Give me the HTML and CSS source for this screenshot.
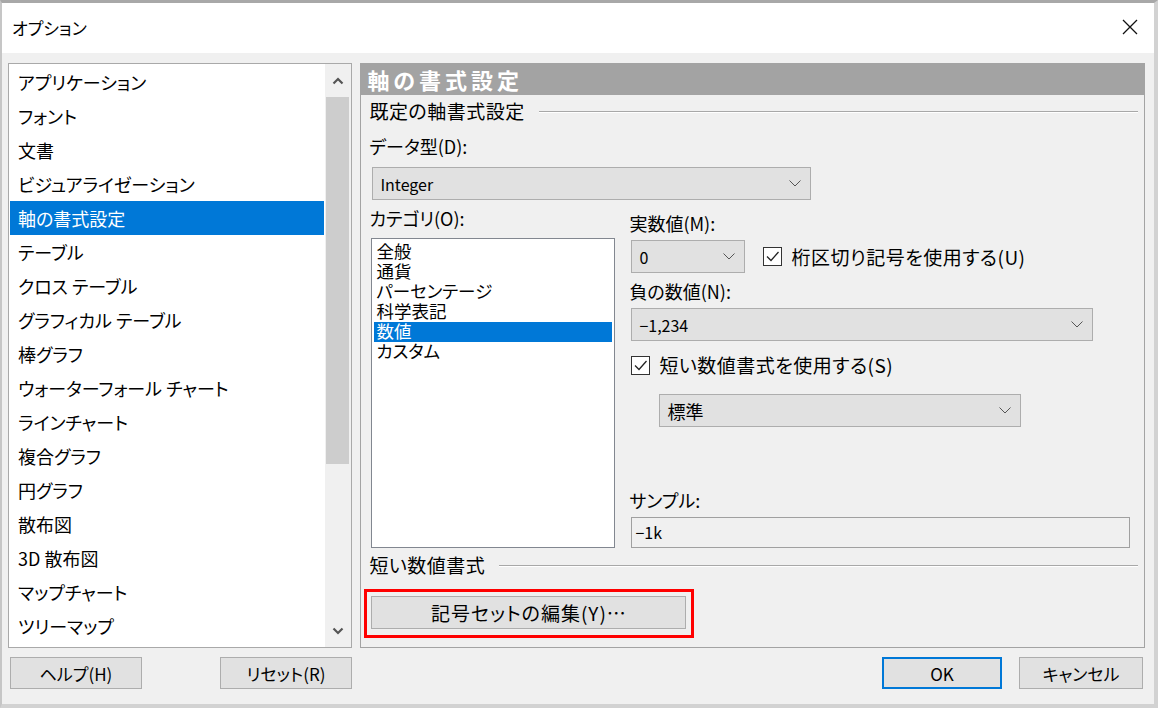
FILE: index.html
```html
<!DOCTYPE html>
<html lang="ja">
<head>
    <meta charset="UTF-8">
    <title>オプション</title>
    <link rel="stylesheet" href="styles.css">
</head>
<body>
<div class="window">
    <div class="titlebar">
        <span class="title">オプション</span>
        <svg class="close" width="16" height="16" viewBox="0 0 16 16"><path d="M1 1 L15 15 M15 1 L1 15" stroke="#111" stroke-width="1.3" fill="none"/></svg>
    </div>

    <div class="dialog-body">
        <div class="main">
            <!-- 左側のメニュー -->
            <div class="nav">
                <ul class="nav-list">
                    <li>アプリケーション</li>
                    <li>フォント</li>
                    <li>文書</li>
                    <li>ビジュアライゼーション</li>
                    <li class="selected">軸の書式設定</li>
                    <li>テーブル</li>
                    <li>クロス テーブル</li>
                    <li>グラフィカル テーブル</li>
                    <li>棒グラフ</li>
                    <li>ウォーターフォール チャート</li>
                    <li>ラインチャート</li>
                    <li>複合グラフ</li>
                    <li>円グラフ</li>
                    <li>散布図</li>
                    <li>3D 散布図</li>
                    <li>マップチャート</li>
                    <li>ツリーマップ</li>
                </ul>
                <div class="scrollbar">
                    <div class="sb-btn"><svg width="12" height="8" viewBox="0 0 12 8"><path d="M1.5 6.5 L6 2 L10.5 6.5" stroke="#555" stroke-width="2.2" fill="none"/></svg></div>
                    <div class="sb-track"><div class="sb-thumb"></div></div>
                    <div class="sb-btn"><svg width="12" height="8" viewBox="0 0 12 8"><path d="M1.5 1.5 L6 6 L10.5 1.5" stroke="#555" stroke-width="2.2" fill="none"/></svg></div>
                </div>
            </div>

            <!-- 右側の設定パネル -->
            <div class="panel">
                <div class="panel-head">軸の書式設定</div>
                <div class="panel-body">
                    <div class="group-title">既定の軸書式設定</div>
                    <div class="label label-type">データ型(D):</div>
                    <div class="combo combo-type">
                        <span>Integer</span>
                        <svg width="12" height="7" viewBox="0 0 12 7"><path d="M0.5 0.5 L6 6 L11.5 0.5" fill="none" stroke="#555"/></svg>
                    </div>

                    <div class="cols">
                        <div class="col-left">
                            <div class="label">カテゴリ(O):</div>
                            <ul class="cat-list">
                                <li>全般</li>
                                <li>通貨</li>
                                <li>パーセンテージ</li>
                                <li>科学表記</li>
                                <li class="selected">数値</li>
                                <li>カスタム</li>
                            </ul>
                        </div>
                        <div class="col-right">
                            <div class="label label-first">実数値(M):</div>
                            <div class="row-decimals">
                                <div class="combo combo-decimals">
                                    <span>0</span>
                                    <svg width="12" height="7" viewBox="0 0 12 7"><path d="M0.5 0.5 L6 6 L11.5 0.5" fill="none" stroke="#555"/></svg>
                                </div>
                                <label class="check check-sep">
                                    <span class="box"><svg width="17" height="17" viewBox="0 0 17 17"><path d="M3 8.5 L7 12.5 L14.5 4" fill="none" stroke="#222" stroke-width="1.3"/></svg></span>
                                    <span>桁区切り記号を使用する(U)</span>
                                </label>
                            </div>
                            <div class="label label-neg">負の数値(N):</div>
                            <div class="combo combo-neg">
                                <span>−1,234</span>
                                <svg width="12" height="7" viewBox="0 0 12 7"><path d="M0.5 0.5 L6 6 L11.5 0.5" fill="none" stroke="#555"/></svg>
                            </div>
                            <label class="check check-short">
                                <span class="box"><svg width="17" height="17" viewBox="0 0 17 17"><path d="M3 8.5 L7 12.5 L14.5 4" fill="none" stroke="#222" stroke-width="1.3"/></svg></span>
                                <span>短い数値書式を使用する(S)</span>
                            </label>
                            <div class="combo combo-std">
                                <span>標準</span>
                                <svg width="12" height="7" viewBox="0 0 12 7"><path d="M0.5 0.5 L6 6 L11.5 0.5" fill="none" stroke="#555"/></svg>
                            </div>
                            <div class="label label-sample">サンプル:</div>
                            <div class="sample">−1k</div>
                        </div>
                    </div>

                    <div class="group-title group-short">短い数値書式</div>
                    <div class="highlight">
                        <button class="btn btn-symbols">記号セットの編集(Y)…</button>
                    </div>
                </div>
            </div>
        </div>

        <div class="footer">
            <div class="footer-left">
                <button class="btn btn-side">ヘルプ(H)</button>
                <button class="btn btn-side">リセット(R)</button>
            </div>
            <div class="footer-right">
                <button class="btn btn-ok">OK</button>
                <button class="btn btn-cancel">キャンセル</button>
            </div>
        </div>
    </div>
</div>
</body>
</html>
```

FILE: styles.css
```css
body {
    margin: 0;
    padding: 0;
    background-color: #ffffff;
    font-family: "Noto Sans CJK JP", "Noto Sans", sans-serif;
    font-feature-settings: "palt";
    color: #000;
    overflow: hidden;
}

ul {
    list-style: none;
    margin: 0;
    padding: 0;
}

.window {
    width: 1158px;
    height: 708px;
    box-sizing: border-box;
    border-top: 3px solid #a8a8a8;
    border-left: 2px solid #c6c6c6;
    border-right: 4px solid #d2d2d2;
    border-bottom: 4px solid #d2d2d2;
    background-color: #f0f0f0;
    display: flex;
    flex-direction: column;
}

/* タイトルバー */
.titlebar {
    height: 50px;
    background-color: #fff;
    display: flex;
    align-items: center;
    justify-content: space-between;
    padding: 0 16px 0 10px;
}

.title {
    font-size: 17px;
    line-height: 20px;
    margin-top: -1px;
}

.close {
    margin-top: -2px;
}

.dialog-body {
    flex: 1;
    padding: 10px 9px 0 6px;
}

.main {
    height: 585px;
    display: flex;
    gap: 8px;
}

/* 左メニュー */
.nav {
    width: 345px;
    box-sizing: border-box;
    border: 1px solid #a9a9a9;
    background-color: #fff;
    display: flex;
}

.nav-list {
    flex: 1;
    padding: 1px 1px 0 1px;
}

.nav-list li {
    height: 34px;
    line-height: 34px;
    padding-left: 8px;
    font-size: 18px;
    white-space: nowrap;
}

.nav-list li.selected {
    background-color: #0078d7;
    color: #fff;
}

.scrollbar {
    width: 26px;
    background-color: #f0f0f0;
    display: flex;
    flex-direction: column;
}

.sb-btn {
    height: 33px;
    display: flex;
    align-items: center;
    justify-content: center;
}

.sb-track {
    flex: 1;
}

.sb-thumb {
    height: 367px;
    margin: 0 2px 0 1px;
    background-color: #cdcdcd;
}

/* 右パネル */
.panel {
    width: 786px;
    box-sizing: border-box;
    border: 1px solid #a3a3a3;
    display: flex;
    flex-direction: column;
}

.panel-head {
    height: 31px;
    line-height: 31px;
    background-color: #a3a3a3;
    color: #fff;
    font-size: 22px;
    font-weight: bold;
    padding-left: 6px;
    letter-spacing: 4px;
}

.panel-body {
    flex: 1;
    padding: 0 6px 0 8px;
}

.label {
    font-size: 18px;
    line-height: 20px;
    height: 20px;
    white-space: nowrap;
}

.group-title {
    margin-top: 6px;
    font-size: 19px;
    letter-spacing: 0.5px;
    line-height: 20px;
    height: 20px;
    display: flex;
    align-items: center;
    gap: 14px;
}

.group-title::after {
    content: "";
    flex: 1;
    border-top: 1px solid #a8a8a8;
    border-bottom: 1px solid #fff;
    margin-top: 2px;
}

.group-short {
    margin-top: 7px;
}

.label-type {
    margin-top: 15px;
}

.combo {
    height: 33px;
    box-sizing: border-box;
    border: 1px solid #adadad;
    background-color: #e1e1e1;
    display: flex;
    align-items: center;
    justify-content: space-between;
    padding: 0 9px 0 7px;
    font-size: 16px;
    margin-left: 2px;
}

.combo span {
    line-height: 20px;
}

.combo-type {
    margin-top: 11px;
    margin-left: 3px;
    width: 439px;
}

.cols {
    margin-top: 8px;
    display: grid;
    grid-template-columns: 246px 501px;
    column-gap: 14px;
}

.cat-list {
    margin-top: 10px;
    margin-left: 2px;
    height: 310px;
    box-sizing: border-box;
    border: 1px solid #828790;
    background-color: #fff;
    padding: 3px 2px 0 2px;
}

/* 行間が詰まっているのでラテン系フォントの高さを基準にする */
.cat-list li {
    height: 20px;
    line-height: 20px;
    font-family: "Liberation Sans", "Noto Sans CJK JP", sans-serif;
    font-size: 17.5px;
    padding-left: 2px;
    white-space: nowrap;
}

.cat-list li.selected {
    background-color: #0078d7;
    color: #fff;
}

.label-first {
    margin-top: 5px;
}

.row-decimals {
    margin-top: 7px;
    display: flex;
    align-items: center;
}

.combo-decimals {
    width: 114px;
}

.check {
    display: flex;
    align-items: center;
    font-size: 19px;
    letter-spacing: 0.5px;
    line-height: 20px;
    white-space: nowrap;
}

.check .box {
    width: 19px;
    height: 19px;
    box-sizing: border-box;
    border: 1px solid #333;
    background-color: #fff;
    display: flex;
    align-items: center;
    justify-content: center;
}

.check-sep {
    margin-left: 18px;
    gap: 9px;
}

.label-neg {
    margin-top: 8px;
}

.combo-neg {
    margin-top: 7px;
    width: 462px;
}

.check-short {
    margin-top: 14px;
    margin-left: 2px;
    gap: 9px;
    height: 20px;
}

.combo-std {
    margin-top: 19px;
    margin-left: 30px;
    width: 362px;
}

.combo-std span {
    font-size: 18px;
}

.label-sample {
    margin-top: 63px;
}

.sample {
    margin-top: 7px;
    margin-left: 2px;
    width: 499px;
    height: 31px;
    box-sizing: border-box;
    border: 1px solid #a0a0a0;
    background-color: #f0f0f0;
    font-size: 16px;
    line-height: 29px;
    padding-left: 3px;
}

/* 赤枠で囲まれたボタン */
.highlight {
    margin-top: 14px;
    margin-left: -5px;
    width: 330px;
    height: 49px;
    box-sizing: border-box;
    border: 3px solid #ff0000;
    padding: 4px 5px 6px 4px;
}

.btn {
    font-family: inherit;
    font-feature-settings: "palt";
    background-color: #e1e1e1;
    border: 1px solid #adadad;
    color: #000;
    font-size: 17px;
    padding: 0;
    margin: 0;
    height: 32px;
    box-sizing: border-box;
}

.btn-symbols {
    width: 100%;
    height: 33px;
    font-size: 19px;
    letter-spacing: 1px;
}

.footer {
    margin-top: 9px;
    display: flex;
    justify-content: space-between;
}

.footer-left {
    width: 345px;
    box-sizing: border-box;
    padding: 0 1px 0 2px;
    display: flex;
    justify-content: space-between;
}

.btn-side {
    width: 132px;
}

.footer-right {
    display: flex;
    gap: 17px;
    padding-right: 2px;
}

.btn-ok {
    width: 120px;
    border: 2px solid #0078d7;
}

.btn-cancel {
    width: 124px;
}
```
